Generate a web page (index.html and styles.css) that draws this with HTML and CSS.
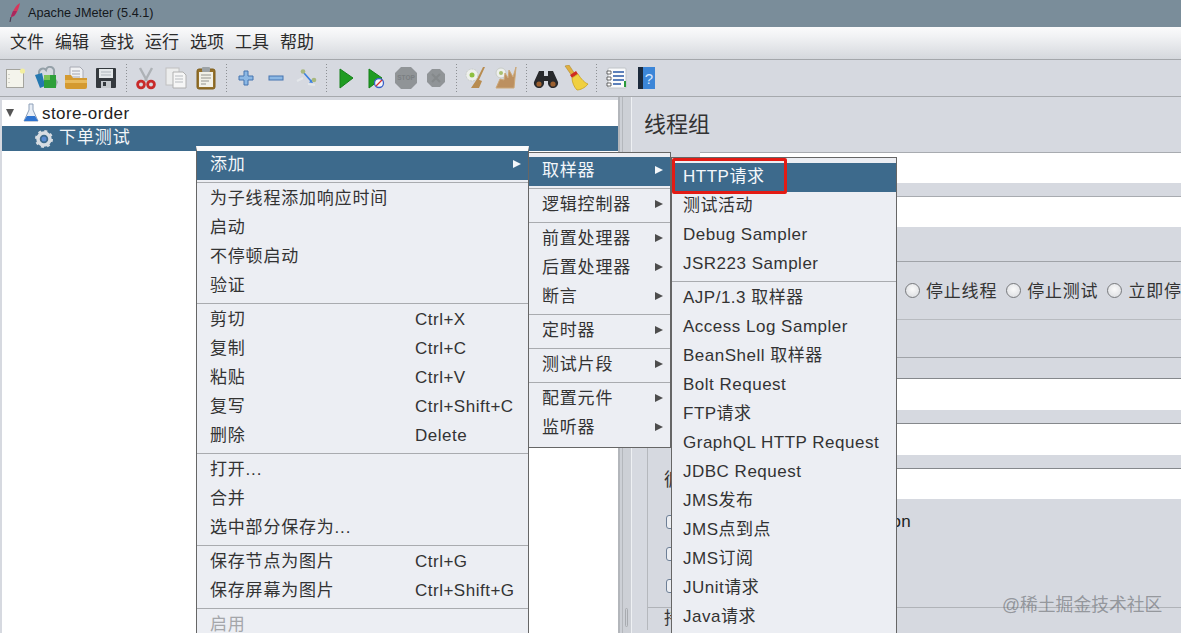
FILE: index.html
```html
<!DOCTYPE html>
<html lang="zh-CN">
<head>
<meta charset="utf-8">
<title>Apache JMeter (5.4.1)</title>
<link rel="stylesheet" href="styles.css">
</head>
<body>
<div class="app">
  <header class="titlebar">
    <svg class="feather" width="14" height="22" viewBox="0 0 14 22"><path d="M12 1C8 3 5 8 3 15l3-1c3-3 5-8 6-13z" fill="#d8365a"/><path d="M5 9c-1 2-2 5-2 6l3-1c1-1 2-3 3-5z" fill="#a8285e"/><path d="M3 15l-1 5" stroke="#4a3a50" stroke-width="1.2"/></svg>
    <span>Apache JMeter (5.4.1)</span>
  </header>
  <nav class="menubar">
    <span>文件</span><span>编辑</span><span>查找</span><span>运行</span><span>选项</span><span>工具</span><span>帮助</span>
  </nav>
  <div class="toolbar">
    <div class="tool"><svg width="24" height="24" viewBox="0 0 24 24"><rect x="2.500" y="3.500" width="17" height="18" fill="#f4f4ec" stroke="#a4a49e"/><path d="M5 8v1M5 12v1M5 16v1" stroke="#b4b4ae"/><circle cx="18.500" cy="5" r="2.600" fill="#f2eea0"/></svg></div>
    <div class="tool"><svg width="24" height="24" viewBox="0 0 24 24"><path d="M5 10V6a4 4 0 0 1 7-2 4 4 0 0 1 8 2v8" fill="none" stroke="#94a0a8" stroke-width="2"/><path d="M1 9l7-2 3 13-5 2z" fill="#2478b0"/><rect x="10" y="9" width="12" height="13" fill="#2ea03a"/><path d="M10 9h6v5h-6z" fill="#7cc455"/><path d="M22 13l2 3-2 5z" fill="#9cb0aa"/></svg></div>
    <div class="tool"><svg width="24" height="24" viewBox="0 0 24 24"><path d="M6 1h10l3 3v11H6z" fill="#f0f1f3" stroke="#a8aab4"/><path d="M8 5h8M8 8h8M8 11h8" stroke="#a4a6b0"/><path d="M1 9h6l2 3h14v9a2 2 0 0 1-2 2H3a2 2 0 0 1-2-2z" fill="#d49a30"/><path d="M1 14h22v3H1z" fill="#e8ba5c"/></svg></div>
    <div class="tool"><svg width="24" height="24" viewBox="0 0 24 24"><rect x="2" y="2" width="20" height="20" rx="1" fill="#34393e"/><rect x="5" y="3" width="14" height="9" fill="#e4e8ea"/><path d="M7 6h10M7 9h10" stroke="#aeb6bc"/><rect x="7" y="15" width="10" height="7" fill="#c4c8cc"/><rect x="9" y="16" width="3" height="4" fill="#34393e"/></svg></div>
    <i class="tool-sep"></i>
    <div class="tool"><svg width="24" height="24" viewBox="0 0 24 24"><path d="M6 2l7 13M18 2l-7 13" stroke="#aeb2b6" stroke-width="2.400"/><circle cx="7" cy="18.500" r="3.400" fill="none" stroke="#c82a2a" stroke-width="2.800"/><circle cx="17" cy="18.500" r="3.400" fill="none" stroke="#c82a2a" stroke-width="2.800"/></svg></div>
    <div class="tool"><svg width="24" height="24" viewBox="0 0 24 24"><rect x="2" y="2" width="13" height="17" fill="#eceded" stroke="#c0c0c0"/><path d="M9 6h10l3 3v13H9z" fill="#f6f6f6" stroke="#b0b0b0"/><path d="M11 10h8M11 13h8M11 16h8" stroke="#b8bcc0"/></svg></div>
    <div class="tool"><svg width="24" height="24" viewBox="0 0 24 24"><rect x="3" y="3" width="18" height="20" rx="2" fill="#94702a" stroke="#7f5e1c"/><rect x="5" y="6" width="14" height="15" fill="#f2f1e8"/><rect x="8" y="1" width="8" height="5" rx="1" fill="#9ca2a6"/><path d="M7 9h10M7 12h10M7 15h8M7 18h5" stroke="#94948e"/></svg></div>
    <i class="tool-sep"></i>
    <div class="tool"><svg width="24" height="24" viewBox="0 0 24 24"><path d="M10 5h4v5h5v4h-5v5h-4v-5H5v-4h5z" fill="#8cb8e4" stroke="#4474b0"/></svg></div>
    <div class="tool"><svg width="24" height="24" viewBox="0 0 24 24"><rect x="5" y="10" width="14" height="4" fill="#8cb8e4" stroke="#4474b0"/></svg></div>
    <div class="tool"><svg width="24" height="24" viewBox="0 0 24 24"><path d="M3 15l6-3M21 19l-7-1" stroke="#e4e7ea" stroke-width="2"/><path d="M10 7l7 8" stroke="#3a80e0" stroke-width="1.600"/><path d="M19 17l-4-.5 2.500-3z" fill="#3a80e0"/><circle cx="9" cy="5.500" r="2.300" fill="#a8b87e"/><circle cx="20" cy="14" r="2.300" fill="#a8b87e"/></svg></div>
    <i class="tool-sep"></i>
    <div class="tool"><svg width="24" height="24" viewBox="0 0 24 24"><path d="M6 3l13 9-13 10z" fill="#1f9c22" stroke="#16801a"/></svg></div>
    <div class="tool"><svg width="24" height="24" viewBox="0 0 24 24"><path d="M5 3l13 9-13 10z" fill="#1f9c22" stroke="#16801a"/><circle cx="15" cy="17" r="4.500" fill="#f4f6fa" stroke="#3a60c8" stroke-width="1.300"/><path d="M12 20l6-6" stroke="#d83030" stroke-width="1.300"/></svg></div>
    <div class="tool"><svg width="24" height="24" viewBox="0 0 24 24"><path d="M7 1h10l6 6v10l-6 6H7l-6-6V7z" fill="#909497"/><text x="12" y="14" class="stop-label">STOP</text></svg></div>
    <div class="tool"><svg width="24" height="24" viewBox="0 0 24 24"><path d="M8 3h8l5 5v8l-5 5H8l-5-5V8z" fill="#909497"/><path d="M8 8l8 8M16 8l-8 8" stroke="#85898b" stroke-width="2"/></svg></div>
    <i class="tool-sep"></i>
    <div class="tool"><svg width="24" height="24" viewBox="0 0 24 24"><circle cx="8" cy="9" r="6" fill="#eef0ec" stroke="#c8ccc8" stroke-dasharray="2 1"/><circle cx="8" cy="9" r="2.500" fill="#8ec040"/><path d="M21 1l-6 13-2-1 6-12zM13 13l5 2-3 7H7z" fill="#b88c50"/></svg></div>
    <div class="tool"><svg width="24" height="24" viewBox="0 0 24 24"><circle cx="7" cy="7" r="5" fill="#eef0ec" stroke="#c8ccc8"/><circle cx="7" cy="7" r="2" fill="#a8c070"/><path d="M22 1l-3 10-4-7-1 8-3-5-1 7-4-1-4 9h18z" fill="#bc9060" stroke="#cca878"/></svg></div>
    <i class="tool-sep"></i>
    <div class="tool"><svg width="26" height="24" viewBox="0 0 26 24"><path d="M6 5h5v5h4V5h5l5 11a5 5 0 1 1-10 2v-3h-4v3a5 5 0 1 1-10-2z" fill="#28292c"/><circle cx="6" cy="18" r="2.600" fill="#9c6030"/><circle cx="20" cy="18" r="2.600" fill="#9c6030"/></svg></div>
    <div class="tool"><svg width="26" height="26" viewBox="0 0 26 26"><path d="M2 1l4-1 6 9-3 2z" fill="#e0b040" stroke="#a88020" stroke-width=".5"/><path d="M7 10l6-4 2 3-6 4z" fill="#d02a20"/><path d="M9 13l6-4c3 5 7 9 10 10-3 4-8 6-11 6-3-3-5-8-5-12z" fill="#f0d040" stroke="#c8a020" stroke-width=".8"/></svg></div>
    <i class="tool-sep"></i>
    <div class="tool"><svg width="24" height="24" viewBox="0 0 24 24"><rect x="4" y="2" width="18" height="20" rx="1" fill="#fafbfc" stroke="#c0c4c8"/><path d="M9 6h11M9 10h11M9 14h11M9 18h8" stroke="#2858a4" stroke-width="1.300"/><path d="M3 5h4v3H3zM3 11h4v3H3zM3 17h4v3H3z" fill="#fff" stroke="#444" stroke-width=".8"/><rect x="20" y="15" width="2" height="6" fill="#2a9a3a"/></svg></div>
    <div class="tool"><svg width="24" height="24" viewBox="0 0 24 24"><rect x="4" y="1" width="17" height="22" fill="#3c86d8"/><rect x="4" y="1" width="5" height="22" fill="#1c2a3c"/><text x="15" y="18" class="help-label">?</text></svg></div>
  </div>

  <main class="workspace">
    <section class="tree">
      <div class="tree-row">
        <i class="expander"></i>
        <svg class="tree-icon" width="16" height="20" viewBox="0 0 16 20"><path d="M6 1h4v6l5 11H1L6 7z" fill="#e8eef6" stroke="#8ea0b8"/><path d="M4 13h8l3 5H1z" fill="#2f74d0"/></svg>
        <span class="tree-label">store-order</span>
      </div>
      <div class="tree-row tree-row-selected">
        <svg class="gear" width="18" height="18" viewBox="0 0 18 18"><circle cx="9" cy="9" r="6" fill="none" stroke="#d8dde2" stroke-width="3.500"/><circle cx="9" cy="9" r="8" fill="none" stroke="#d8dde2" stroke-width="2" stroke-dasharray="3 3.300"/><circle cx="9" cy="9" r="2.500" fill="#5a8ad0"/></svg>
        <span>下单测试</span>
      </div>
    </section>
    <div class="splitter"><i class="grip"></i></div>
    <section class="panel">
      <h1 class="panel-title">线程组</h1>
      <div class="wide-field"></div>
      <div class="wide-field wide-field-second"></div>
      <div class="group">
        <div class="radio-row">
          <i class="radio"></i><span>停止线程</span>
          <i class="radio"></i><span>停止测试</span>
          <i class="radio"></i><span>立即停止测试</span>
        </div>
        <div class="blank-row"></div>
        <div class="form-field form-field-first"></div>
        <div class="form-field"></div>
        <div class="form-field form-field-loop"><span class="field-label">循环次数</span><div class="field-input"></div></div>
        <div class="check-row check-row-first"><i class="check"></i><span>Same user on each iteration</span></div>
        <div class="check-row"><i class="check"></i></div>
        <div class="check-row"><i class="check"></i></div>
        <div class="duration"><span>持</span></div>
      </div>
    </section>
  </main>

  <div class="menu menu-main">
    <div class="item active cjk"><span>添加</span><i class="arrow"></i></div>
    <hr>
    <div class="item cjk"><span>为子线程添加响应时间</span></div>
    <div class="item cjk"><span>启动</span></div>
    <div class="item cjk"><span>不停顿启动</span></div>
    <div class="item cjk"><span>验证</span></div>
    <hr>
    <div class="item cjk"><span class="label">剪切</span><span class="key">Ctrl+X</span></div>
    <div class="item cjk"><span class="label">复制</span><span class="key">Ctrl+C</span></div>
    <div class="item cjk"><span class="label">粘贴</span><span class="key">Ctrl+V</span></div>
    <div class="item cjk"><span class="label">复写</span><span class="key">Ctrl+Shift+C</span></div>
    <div class="item cjk"><span class="label">删除</span><span class="key">Delete</span></div>
    <hr>
    <div class="item cjk"><span>打开...</span></div>
    <div class="item cjk"><span>合并</span></div>
    <div class="item cjk"><span>选中部分保存为...</span></div>
    <hr>
    <div class="item cjk"><span class="label">保存节点为图片</span><span class="key">Ctrl+G</span></div>
    <div class="item cjk"><span class="label">保存屏幕为图片</span><span class="key">Ctrl+Shift+G</span></div>
    <hr>
    <div class="item cjk disabled"><span>启用</span></div>
  </div>

  <div class="menu menu-add">
    <div class="item active cjk"><span>取样器</span><i class="arrow"></i></div>
    <hr>
    <div class="item cjk"><span>逻辑控制器</span><i class="arrow"></i></div>
    <hr>
    <div class="item cjk"><span>前置处理器</span><i class="arrow"></i></div>
    <div class="item cjk"><span>后置处理器</span><i class="arrow"></i></div>
    <div class="item cjk"><span>断言</span><i class="arrow"></i></div>
    <hr>
    <div class="item cjk"><span>定时器</span><i class="arrow"></i></div>
    <hr>
    <div class="item cjk"><span>测试片段</span><i class="arrow"></i></div>
    <hr>
    <div class="item cjk"><span>配置元件</span><i class="arrow"></i></div>
    <div class="item cjk"><span>监听器</span><i class="arrow"></i></div>
  </div>

  <div class="menu menu-sampler">
    <div class="item active"><span>HTTP请求</span></div>
    <div class="item"><span>测试活动</span></div>
    <div class="item"><span>Debug Sampler</span></div>
    <div class="item"><span>JSR223 Sampler</span></div>
    <hr>
    <div class="item"><span>AJP/1.3 取样器</span></div>
    <div class="item"><span>Access Log Sampler</span></div>
    <div class="item"><span>BeanShell 取样器</span></div>
    <div class="item"><span>Bolt Request</span></div>
    <div class="item"><span>FTP请求</span></div>
    <div class="item"><span>GraphQL HTTP Request</span></div>
    <div class="item"><span>JDBC Request</span></div>
    <div class="item"><span>JMS发布</span></div>
    <div class="item"><span>JMS点到点</span></div>
    <div class="item"><span>JMS订阅</span></div>
    <div class="item"><span>JUnit请求</span></div>
    <div class="item"><span>Java请求</span></div>
    <div class="item"></div>
  </div>

  <div class="callout"></div>
  <div class="watermark">@稀土掘金技术社区</div>
</div>
</body>
</html>
```

FILE: styles.css
```css
* { box-sizing: border-box; }
html, body { margin: 0; padding: 0; height: 633px; overflow: hidden; }
body { font-family: "Liberation Sans", "Noto Sans CJK SC", sans-serif; color: #333; background: #d6d9e0; }

.app { position: relative; width: 1181px; height: 633px; overflow: hidden; display: flex; flex-direction: column; }

.titlebar { height: 27px; flex: none; background: #7a8d9a; display: flex; align-items: center; padding: 0 0 2px 8px; font-size: 12.700px; color: #14181c; }
.titlebar span { margin-left: 6px; }
.feather { flex: none; }

.menubar { height: 33px; flex: none; background: linear-gradient(#fbfbfc, #f1f2f4 30%, #d5d8dd); border-bottom: 1px solid #a4a7ab; display: flex; gap: 11px; padding: 0 0 1px 10px; align-items: center; font-size: 17px; line-height: 20px; color: #2c2c2c; }

.toolbar { height: 37px; flex: none; background: #d6d9e0; border-bottom: 1px solid #a6a9ad; display: flex; align-items: center; padding-left: 1px; }
.tool { width: 30px; height: 36px; flex: none; display: flex; align-items: center; justify-content: center; }
.tool-sep { width: 10px; height: 28px; flex: none; background: repeating-linear-gradient(#8d9094 0 1px, transparent 1px 3px) center / 1px 100% no-repeat; }
.stop-label { font-size: 6.500px; font-weight: 700; text-anchor: middle; fill: #7b7f82; font-family: "Liberation Sans", sans-serif; }
.help-label { font-size: 15px; text-anchor: middle; fill: #d7e8ff; font-family: "Liberation Sans", sans-serif; }

.workspace { flex: 1; min-height: 0; display: flex; background: #d6d9e0; }

.tree { width: 616px; margin: 3px 0 0 2px; flex: none; background: #fff; font-size: 17px; line-height: 20px; letter-spacing: .4px; color: #222; }
.tree-row { height: 26px; display: flex; align-items: center; }
.tree-label { padding-top: 1px; }
.expander { width: 0; height: 0; margin: 0 9px 0 4px; border-left: 4px solid transparent; border-right: 4px solid transparent; border-top: 8px solid #555; }
.tree-icon { margin-right: 3px; flex: none; }
.tree-row-selected { height: 25px; background: #3d6a8c; color: #f2f5f8; padding: 0 0 1px 33px; letter-spacing: .9px; }
.gear { flex: none; margin: 1px 6px 0 0; }

.splitter { width: 14px; flex: none; position: relative; background: linear-gradient(#b4b7bc, #b4b7bc) 2px 0 / 1px 100% no-repeat #cdd0d6; border-left: 2px solid #b3b6bb; border-right: 1px solid #eef0f3; }
.grip { position: absolute; left: 5px; bottom: 6px; width: 3px; height: 19px; border: 1px solid #a8abb0; border-radius: 2px; }

.panel { flex: 1; min-width: 0; background: #d6d9e0; }
.panel-title { height: 55px; margin: 0; padding: 12px 0 0 12px; font-size: 22px; font-weight: 400; line-height: 32px; color: #333; }
.wide-field { height: 31px; margin-left: 68px; background: #fff; border-top: 1px solid #a8abb0; }
.wide-field-second { margin-top: 13px; }

.group { margin: 34px 0 0 15px; border-left: 1px solid #b5b8bd; border-top: 1px solid #a0a3a8; }
.radio-row { height: 58px; padding-left: 257px; display: flex; align-items: center; white-space: nowrap; font-size: 17px; line-height: 20px; letter-spacing: .8px; color: #333; border-bottom: 1px solid #b8bbc0; overflow: hidden; }
.radio { width: 15px; height: 15px; flex: none; border: 1px solid #77797c; border-radius: 50%; background: radial-gradient(circle at 50% 40%, #fafafa, #d8dade); margin-right: 6px; }
.radio-row span { margin-right: 9px; flex: none; padding-top: 2px; }
.blank-row { height: 38px; border-bottom: 1px solid #a0a3a8; }

.form-field { height: 32px; margin: 13px 0 0 60px; background: #fff; border-top: 1px solid #85888c; }
.form-field-first { margin-top: 20px; }
.form-field-loop { height: 31px; margin-left: 0; background: none; border-top: 0; display: flex; }
.field-label { width: 100px; flex: none; padding: 0 0 0 16px; font-size: 18px; line-height: 24px; }
.field-input { flex: 1; background: #fff; border-top: 1px solid #85888c; }

.check-row { height: 32px; display: flex; align-items: center; padding-left: 18px; font-size: 17px; line-height: 20px; letter-spacing: .35px; color: #222; white-space: nowrap; }
.check-row-first { margin-top: 7px; }
.check { width: 14px; height: 14px; flex: none; border: 1px solid #6d7f96; border-radius: 3px; background: #eceef2; margin-right: 9px; }

.duration { margin-top: 5px; border-top: 1px solid #b0b3b8; padding: 0 0 0 16px; font-size: 17px; line-height: 22px; }

.menu { position: absolute; background: #eceef3; border: 1px solid #666; font-size: 17px; line-height: 20px; letter-spacing: .5px; color: #333; }
.menu hr { height: 5px; margin: 0; border: 0; background: linear-gradient(#a9abaf, #a9abaf) 0 2px / 100% 1px no-repeat; }
.item { height: 29px; display: flex; align-items: center; padding: 0 7px 2px 13px; white-space: nowrap; }
.item.cjk { letter-spacing: .8px; }
.item.active { background: #3d6a8c; color: #f4f7fa; }
.item.disabled { color: #a4a6aa; }
.label { width: 205px; flex: none; }
.key { letter-spacing: .5px; }
.arrow { margin: 0 0 1px auto; width: 0; height: 0; border-top: 4.500px solid transparent; border-bottom: 4.500px solid transparent; border-left: 8px solid #4d4d4d; }
.active .arrow { border-left-color: #f4f7fa; }

.menu-main { left: 196px; top: 146px; width: 333px; border-top: 5px solid #fafafb; border-bottom: 0; }
.menu-add { left: 528px; top: 152px; width: 143px; padding: 4px 0; }
.menu-sampler { left: 671px; top: 157px; width: 226px; padding-top: 5px; border-bottom: 0; }
.menu-sampler .item { padding-left: 11px; }

.callout { position: absolute; left: 672px; top: 158px; width: 115px; height: 36px; border: 3px solid #e31b14; border-radius: 2px; }
.watermark { position: absolute; left: 1002px; top: 593px; font-size: 17.800px; line-height: 24px; color: rgba(105, 108, 112, .62); }
```
